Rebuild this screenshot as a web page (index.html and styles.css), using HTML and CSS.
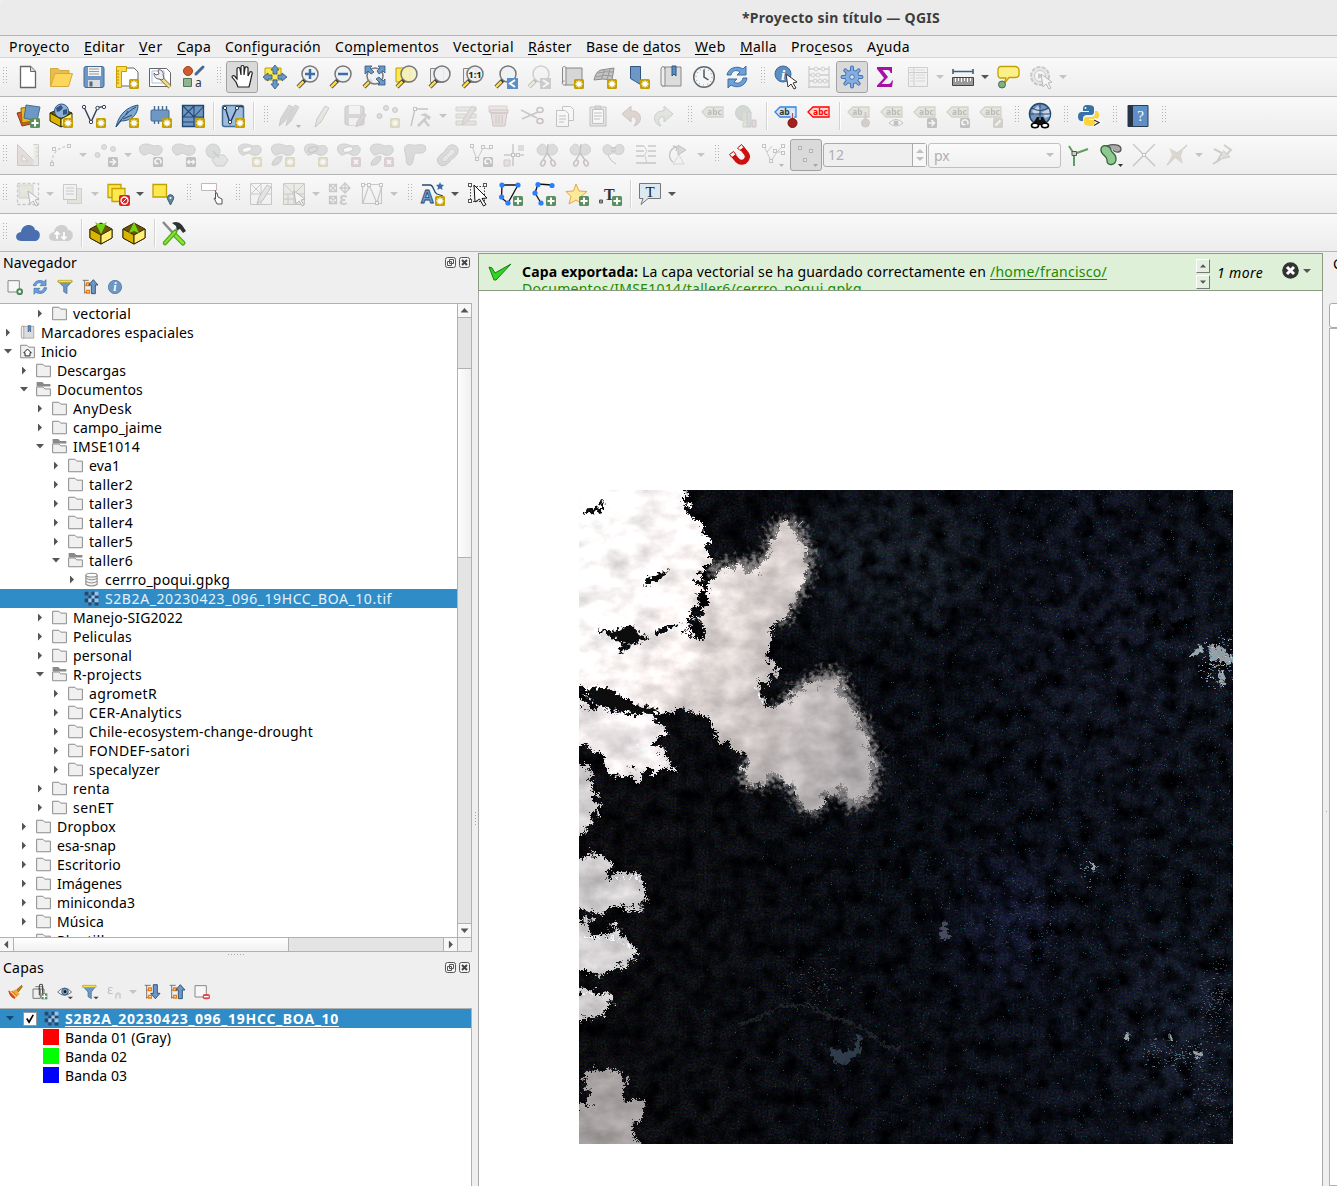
FILE: index.html
```html
<!DOCTYPE html>
<html lang="es">
<head>
<meta charset="utf-8">
<title>*Proyecto sin título — QGIS</title>
<link rel="stylesheet" href="styles.css">
</head>
<body>
<div class="window">
  <header class="titlebar"><span data-w="198">*Proyecto sin título — QGIS</span></header>
  <nav class="menubar">
    <span data-w="61">Pro<u>y</u>ecto</span><span data-w="41"><u>E</u>ditar</span><span data-w="24"><u>V</u>er</span><span data-w="34"><u>C</u>apa</span><span data-w="96">Con<u>f</u>iguración</span><span data-w="104">Co<u>m</u>plementos</span><span data-w="61">Vect<u>o</u>rial</span><span data-w="44"><u>R</u>áster</span><span data-w="95">Base de <u>d</u>atos</span><span data-w="31"><u>W</u>eb</span><span data-w="37"><u>M</u>alla</span><span data-w="62">Pro<u>c</u>esos</span><span data-w="43">A<u>y</u>uda</span>
  </nav>
  <div class="toolbar" data-items="G new open save layout manager style g hand:p pan zoomin zoomout zoomfull zoomsel zoomlayer zoomone zoomlast zoomnext:o newmap new3d newmark marks clock refresh g identify abacus:o gear:p sigma table:oa ruler:a tip action:oa"></div>
  <div class="toolbar" data-items="G addlayer geopkg newshape spatialite chip mesh s virtual s g pencils:o pencil:o saveedit:o addpts:o vertex:oa form:o trash:o cut:o copy:o paste:o undo:o redo:o g label:o pie:o s labelpin labelred s lab1:o lab2:o lab3:o lab4:o lab5:o g globe g python g help g"></div>
  <div class="toolbar" data-items="G triangle:o curve:oa movepts:oa blobrot:o blobscale:o circlehex:o ring:o part:o fillring:o delring:o delpart:o reshape:o offset:o splitnode:o trimnode:o split:o splitpart:o merge:o attrs:o rotate:oa g magnet snapnode:o snapgrid:po @spin @combo topo avoid cross:o crossfill:oa trace:o"></div>
  <div class="toolbar" data-items="G select:oa selform:oa deselect:a selplace g maptip g formedit:o selval:oa selexpr:o vpoly:oa g annot:a modsel annpoly annline annstar anntext s balloon:a"></div>
  <div class="toolbar last" data-items="G cloud cloudsync s boxdown boxup s tools"></div>

  <main class="work">
    <aside class="docks">
      <section class="dock browser">
        <div class="dock-title"><span data-w="74">Navegador</span><i class="dock-btns"></i></div>
        <div class="dock-tools" data-small="addsmall refresh filter collapse info"></div>
        <div class="tree-box">
          <div class="tree" id="tree"></div>
          <div class="vscroll"><i class="sb up"></i><i class="trough t1"></i><i class="thumb"></i><i class="trough t2"></i><i class="sb down"></i></div>
          <div class="hscroll"><i class="sb left"></i><i class="thumb"></i><i class="trough"></i><i class="sb right"></i><i class="corner"></i></div>
        </div>
      </section>
      <div class="hsplit"></div>
      <section class="dock layers">
        <div class="dock-title"><span data-w="41">Capas</span><i class="dock-btns"></i></div>
        <div class="dock-tools" data-small="brush group eye filterdd eps:oa expand collapse remove"></div>
        <div class="layer-box">
          <div class="layer sel"><i class="tri open"></i><i class="check"><svg viewBox="0 0 13 13"><path d="M3 6l2.5 4L10 2" fill="none" stroke="#000" stroke-width="1.8"/></svg></i><i class="ras" data-icon="raster"></i><b data-w="274">S2B2A_20230423_096_19HCC_BOA_10</b></div>
          <div class="layer"><i class="swatch red"></i><span data-w="106">Banda 01 (Gray)</span></div>
          <div class="layer"><i class="swatch green"></i><span data-w="62">Banda 02</span></div>
          <div class="layer"><i class="swatch blue"></i><span data-w="62">Banda 03</span></div>
        </div>
      </section>
    </aside>
    <div class="vsplit"></div>
    <section class="canvas">
      <div class="message">
        <svg class="tick" viewBox="0 0 24 18"><path d="M1 4l3 1 3 5L23 1 8 17H6z" fill="#2fd81f" stroke="#16781a"/></svg>
        <div class="msg-text">
          <div class="msg-line"><b data-w="116">Capa exportada:</b><span data-w="344">La capa vectorial se ha guardado correctamente en</span><a data-w="117">/home/francisco/</a></div>
          <div class="msg-line"><a data-w="340">Documentos/IMSE1014/taller6/cerrro_poqui.gpkg</a></div>
        </div>
        <div class="msg-spin"><i class="up"></i><i class="down"></i></div>
        <em data-w="46">1 more</em>
        <svg class="close" viewBox="0 0 17 17"><circle cx="8.500" cy="8.500" r="8.300" fill="#333"/><path d="M5 5l7 7M12 5l-7 7" stroke="#fff" stroke-width="3"/></svg>
        <i class="dd"></i>
      </div>
      <svg class="raster" id="scene" viewBox="0 0 654 654" width="654" height="654">
        <defs>
          <filter id="rough" x="-5%" y="-5%" width="110%" height="110%" color-interpolation-filters="sRGB">
            <feTurbulence type="fractalNoise" baseFrequency="0.11" numOctaves="5" seed="4" result="n"/>
            <feDisplacementMap in="SourceGraphic" in2="n" scale="22" xChannelSelector="R" yChannelSelector="G" result="d"/>
            <feTurbulence type="fractalNoise" baseFrequency="0.6" numOctaves="2" seed="5" result="fine"/>
            <feDisplacementMap in="d" in2="fine" scale="7" xChannelSelector="R" yChannelSelector="G" result="e"/>
            <feGaussianBlur in="e" stdDeviation="0.7" result="b"/>
            <feTurbulence type="fractalNoise" baseFrequency="0.035 0.05" numOctaves="6" seed="8" result="t"/>
            <feColorMatrix in="t" type="matrix" values="0.36 0 0 0 0.72  0.36 0 0 0 0.71  0.36 0 0 0 0.71  0 0 0 0 1" result="g"/>
            <feComposite in="b" in2="g" operator="arithmetic" k1="1.120" k2="0" k3="0" k4="0"/>
          </filter>
          <filter id="fluff" x="-20%" y="-20%" width="140%" height="140%" color-interpolation-filters="sRGB">
            <feGaussianBlur in="SourceGraphic" stdDeviation="4" result="s"/>
            <feTurbulence type="fractalNoise" baseFrequency="0.22" numOctaves="4" seed="21" result="n"/>
            <feDisplacementMap in="s" in2="n" scale="26" xChannelSelector="R" yChannelSelector="G"/>
          </filter>
          <filter id="grain" x="0" y="0" width="100%" height="100%" color-interpolation-filters="sRGB">
            <feTurbulence type="fractalNoise" baseFrequency="0.5" numOctaves="3" seed="3"/>
            <feColorMatrix type="matrix" values="0.300 0 0 0 -0.115  0 0.300 0 0 -0.108  0 0 0.350 0 -0.115  0 0 0 0 1"/>
          </filter>
          <filter id="mottle" x="0" y="0" width="100%" height="100%" color-interpolation-filters="sRGB">
            <feTurbulence type="fractalNoise" baseFrequency="0.06" numOctaves="6" seed="12"/>
            <feColorMatrix type="matrix" values="0 0 0 0 0  0 0 0 0 0  0 0 0 0 0.008  2.200 0 0 0 -0.750"/>
          </filter>
          <filter id="soft" x="-100%" y="-100%" width="300%" height="300%" color-interpolation-filters="sRGB"><feGaussianBlur stdDeviation="26"/></filter>
          <filter id="jag" x="-30%" y="-30%" width="160%" height="160%"><feTurbulence type="fractalNoise" baseFrequency="0.25" numOctaves="3" seed="9"/><feDisplacementMap in="SourceGraphic" scale="10" xChannelSelector="R" yChannelSelector="G"/><feGaussianBlur stdDeviation="0.4"/></filter>
          <linearGradient id="cl" gradientUnits="userSpaceOnUse" x1="0" y1="80" x2="290" y2="230"><stop offset="0" stop-color="#fff"/><stop offset=".35" stop-color="#f8f4f3"/><stop offset=".5" stop-color="#d8d2d0"/><stop offset="1" stop-color="#b0adae"/></linearGradient>
          <linearGradient id="base" x1="0" x2="1" y1="0" y2="0"><stop offset="0" stop-color="#070504"/><stop offset=".45" stop-color="#04060a"/><stop offset=".75" stop-color="#080b14"/><stop offset="1" stop-color="#090d14"/></linearGradient>
          <clipPath id="frame"><rect width="654" height="654"/></clipPath>
        </defs>
        <g clip-path="url(#frame)">
          <rect width="654" height="654" fill="url(#base)"/>
          <g filter="url(#soft)"><ellipse cx="310" cy="70" rx="90" ry="70" fill="#131920"/><ellipse cx="430" cy="430" rx="40" ry="60" fill="#15193a" opacity=".7"/><ellipse cx="530" cy="160" rx="90" ry="150" fill="#0d101c"/><ellipse cx="600" cy="540" rx="40" ry="100" fill="#141a2c" opacity=".8"/></g>
          <rect width="654" height="654" filter="url(#grain)" style="mix-blend-mode:screen"/>
          <rect width="654" height="654" filter="url(#mottle)"/>
          <g filter="url(#fluff)" fill="#a39f9f" opacity=".8">
            <path d="M130 75L185 66 190 38 205 26 220 32 234 62 232 84 222 106 208 132 150 130zM194 220L214 196 242 182 262 178 272 205 288 232 301 274 296 308 275 322 250 300 238 326 222 322 205 290 170 300 160 286 170 262z"/>
          </g>
          <g filter="url(#rough)">
            <path fill="url(#cl)" d="M-12-12H104L107 14 112 30 125 37 128 60 128 77 117 87 122 103 112 120 108 143 120 149 124 143 118 130 127 113 134 103 128 92 138 82 160 76 173 82 187 72 192 48 205 33 216 38 226 63 226 83 219 103 212 122 194 137 192 157 184 167 202 180 192 190 179 193 187 210 194 220 214 204 242 192 258 188 264 205 281 232 294 273 290 302 275 315 265 298 248 305 238 322 226 320 214 298 194 285 176 296 164 286 169 267 138 247 128 227 113 220 84 223 60 217 27 200 10 202-12 190z"/>
            <path fill="#eae7e8" d="M-12 207L20 220 43 224 70 220 88 240 72 253 99 280 70 280 60 292 51 281 38 289 24 273 13 257-12 253z"/>
            <path fill="#d0cfd1" d="M-12 275H10L12 300 20 322 10 330 6 345-12 355zM-12 373L17 363 33 370 31 389 50 380 63 389 68 404 61 421 38 414 20 424-12 417zM-12 430L10 427 8 441 28 446 36 432 45 450 63 465 50 471 20 484-12 478zM-12 497L33 503 31 523-12 535z"/>
            <path fill="#a5a1a1" d="M5 583L20 577 44 583 44 610 67 613 62 628 50 637 68 666H-12V617H10z"/>
          </g>
          <g filter="url(#jag)" fill="#07080b"><path d="M17 138l17 4 20-8 5 10 12 3-18 7-9 10-6-1 4-9-10-7zM64 92l16-9 12-3-10 7-14 9zM76 141l13-6 14-2-12 6-14 7zM5 20l15-3 5-7-2 11-16 3zM7 200l20-3 25 17 28 6-7 4-33-2-22-8zM180 193l8 0v14l-6 1z"/></g>
          <g filter="url(#jag)" stroke="#f2faff" fill="none" stroke-width="1.800" stroke-dasharray="3 2 6 3 2 4"><path d="M84 4l16 0 5 20 14 12 3 32M112 83l3 20-6 20M12 144l24 5 18 9M38 160l14 3M5 205l20 14 22 3 28 6M57 254l18 14 22 12M177 198l7 16M78 146l12-5 10-5M30 390l30-4 6 14M5 447l20 1 18 2 18 16M4 502l26 3" /></g>
          <g filter="url(#jag)"><path d="M250 557l14 6 12-5 1-12 7-2-3 18-16 14-11-5z" fill="#3a4858" opacity=".8"/><path d="M160 535l22-8 18-10 30-3 18 12 20 5 20 10 20 16 15 2" stroke="#2b3034" stroke-width="2.500" fill="none" opacity=".7"/><path d="M572 130l6-11 3 15-4 7zM592 133l24-6-18 16z" fill="#000"/></g>
          <g filter="url(#jag)" fill="#b9c7cd"><path d="M613 162l8-8 4 8-12 6zM628 155l14 2 14 12-2 5-14-4-8 1zM640 176l7 10-4 12-4-8zM512 373l7 3-4 5zM543 547l7-5-2 7zM590 543l4 4-3 4zM612 562l12 1-4 5z" opacity=".8"/><path d="M361 440l5-10 5 18-9 2z" fill="#444b59"/></g>
          <g id="specks"></g>
        </g>
      </svg>
    </section>
    <aside class="rightdock"><span class="cut">C</span><i class="field"></i><i class="list"></i></aside>
  </main>
</div>
<script src="app.js"></script>
</body>
</html>
```

FILE: styles.css
```css
* { box-sizing: border-box; }
body { margin: 0; background: #efefef; font: 14px/19px "Noto Sans", "Open Sans", sans-serif; color: #000; }
i { font-style: normal; display: block; flex: none; }
svg { display: block; flex: none; }
.window { width: 1337px; height: 1186px; overflow: hidden; display: flex; flex-direction: column; }
[data-w] { display: inline-block; white-space: pre; flex: none; }

.titlebar { height: 36px; background: #ebebeb; border-bottom: 1px solid #b4b4b4; border-top-left-radius: 6px; padding: 8px 0 0 742px; font-weight: 700; color: #3d3d3d; flex: none; }
.menubar { height: 22px; padding: 1px 0 0 9px; display: flex; gap: 14px; border-bottom: 1px solid #d4d4d4; flex: none; }
.menubar u { text-decoration-thickness: 1px; text-underline-offset: 2px; }

.toolbar { height: 39px; flex: none; display: flex; align-items: center; gap: 1px; border-bottom: 1px solid #b5b5b5; background: linear-gradient(#f9f9f9, #ededed); }
.toolbar.last { height: 38px; }
.grip { width: 15px; height: 20px; display: flex; justify-content: flex-end; padding-right: 3px; }
.grip.first { width: 11px; }
.grip::after { content: ""; width: 5px; height: 18px; background: radial-gradient(circle at .5px .5px, #b2b2b2 .7px, transparent .8px) 0 0 / 3px 3px; }
.sep { width: 6px; height: 28px; background: linear-gradient(90deg, transparent 3px, #d2d2d2 3px, #d2d2d2 4px, #fff 4px, #fff 5px, transparent 5px); }
.tool { width: 32px; height: 32px; display: flex; align-items: center; padding: 0 0 0 4px; }
.tool svg { width: 24px; height: 24px; overflow: visible; }
.tool.arrow { width: 44px; }
.tool.arrow::after { content: ""; margin-left: 6px; border: 4px solid transparent; border-top-color: #555; border-bottom: 0; }
.tool.off > svg { opacity: .3; filter: grayscale(.5); }
.tool.off.arrow::after { border-top-color: #c4c4c4; }
.tool.pressed { background: #dadada; border: 1px solid #a2a2a2; border-radius: 3px; padding-left: 3px; }
.spin { width: 104px; height: 24px; border: 1px solid #aaa; border-radius: 3px; display: flex; background: #efefef; color: #b0b0b0; padding-left: 4px; line-height: 22px; }
.spin > span { flex: 1; }
.spin-btns { width: 14px; border-left: 1px solid #aaa; background: #f8f8f8; display: flex; flex-direction: column; align-items: center; justify-content: space-evenly; }
.spin-btns i { border: 4px solid transparent; }
.spin-btns .u { border-top: 0; border-bottom-color: #c0c0c0; }
.spin-btns .d { border-bottom: 0; border-top-color: #c0c0c0; }
.combo { width: 133px; height: 25px; border: 1px solid #c0c0c0; border-radius: 3px; background: linear-gradient(#fbfbfb, #f0f0f0); color: #b0b0b0; display: flex; justify-content: space-between; align-items: center; padding: 0 6px 0 5px; }
.combo i { border: 4px solid transparent; border-top-color: #c0c0c0; border-bottom: 0; }

.work { flex: 1; min-height: 0; display: flex; padding-top: 1px; }
.docks { width: 472px; flex: none; display: flex; flex-direction: column; margin-top: -1px; }
.dock-title { height: 22px; display: flex; justify-content: space-between; padding: 1px 2px 0 3px; }
.dock-btns { display: flex; gap: 3px; padding-top: 4px; }
.dock-btns svg { width: 11px; height: 11px; }
.dock-tools { height: 29px; display: flex; align-items: center; padding: 0 0 4px 7px; gap: 9px; }
.dock-tools .tool { width: 16px; height: 16px; padding: 0; }
.dock-tools .tool svg { width: 16px; height: 16px; }
.dock-tools .tool.arrow { width: 28px; }
.dock-tools .tool.arrow::after { margin-left: 6px; }
.browser { height: 700px; flex: none; }
.tree-box { width: 472px; height: 649px; border: 1px solid #b1b1b1; border-left: 0; background: #fff; display: grid; grid-template: 633px 14px / 457px 14px; }
.tree { overflow: hidden; }
.row { height: 19px; display: flex; align-items: center; padding-left: calc(var(--d) * 16px + 4px); }
.row .ico { width: 15px; height: 15px; margin: 0 6px 0 8px; }
.row .ico svg { width: 15px; height: 15px; }
.row.sel { background: #308cc6; color: #e6f1f9; }
.tri { width: 8px; height: 8px; }
.tri.closed { background: #555; clip-path: polygon(25% 0, 75% 50%, 25% 100%); }
.tri.open { background: #555; clip-path: polygon(0 20%, 100% 20%, 50% 75%); }
.vscroll { display: flex; flex-direction: column; border-left: 1px solid #b1b1b1; }
.hscroll { grid-column: 1 / 3; display: flex; border-top: 1px solid #b1b1b1; }
.sb { width: 13px; height: 13px; background: #f7f7f7; display: flex; align-items: center; justify-content: center; }
.sb::after { content: ""; width: 8px; height: 8px; background: #555; }
.up::after { clip-path: polygon(0 75%, 50% 20%, 100% 75%); }
.down::after { clip-path: polygon(0 25%, 100% 25%, 50% 80%); }
.left::after { clip-path: polygon(70% 0, 20% 50%, 70% 100%); }
.right::after { clip-path: polygon(30% 0, 80% 50%, 30% 100%); }
.vscroll .t1 { height: 51px; }
.vscroll .thumb { height: 190px; background: linear-gradient(90deg, #fdfdfd, #f0f0f0); border-block: 1px solid #b1b1b1; }
.trough { background: #e4e4e4; }
.vscroll .trough { border-top: 1px solid #b1b1b1; }
.vscroll .t2 { flex: 1; border-top: 0; border-bottom: 1px solid #b1b1b1; }
.hscroll .thumb { width: 276px; background: linear-gradient(#fff, #f0f0f0); border-inline: 1px solid #b1b1b1; }
.hscroll .trough { flex: 1; }
.hscroll .right { width: 15px; border-inline: 1px solid #b1b1b1; }
.hscroll .corner { width: 13px; background: #efefef; }
.hsplit { height: 5px; flex: none; background: radial-gradient(circle at .5px .5px, #aaa .7px, transparent .8px) 228px 2px / 3px 5px repeat-x; clip-path: inset(0 226px 0 228px); }
.layers { flex: 1; display: flex; flex-direction: column; }
.layers .dock-title { height: 23px; }
.layers .dock-tools { height: 28px; padding-bottom: 4px; }
.layer-box { flex: 1; background: #fff; border: 1px solid #b1b1b1; border-left: 0; border-bottom: 0; }
.layer { height: 19px; display: flex; align-items: center; padding-left: 43px; }
.layer.sel { background: #308cc6; color: #fff; padding-left: 6px; }
.layer.sel b { text-decoration: underline; text-underline-offset: 2px; text-decoration-thickness: 1px; }
.layer.sel .tri { background: #134a6e; }
.check { width: 14px; height: 14px; margin: 0 6px 0 9px; background: #fff; border: 1px solid #999; }
.ras { width: 15px; height: 15px; margin: 0 6px 0 1px; }
.ras svg { width: 15px; height: 15px; }
.swatch { width: 16px; height: 16px; margin: -1px 6px 0 0; }
.red { background: #f00; }
.green { background: #0f0; }
.blue { background: #00f; }

.vsplit { width: 6px; flex: none; background: linear-gradient(#efefef 557px, transparent 557px, transparent 572px, #efefef 572px), radial-gradient(circle at .5px .5px, #aaa .7px, transparent .8px) 3px 1px / 6px 3px; }
.canvas { width: 845px; flex: none; background: #fff; border: 1px solid #a9a9a9; border-block: 0; display: flex; flex-direction: column; }
.message { height: 38px; margin: 0 -1px; background: #dff0d8; border: 1px solid #899c82; display: flex; flex: none; }
.tick { width: 24px; height: 18px; margin: 9px 0 0 9px; }
.msg-text { width: 684px; height: 36px; overflow: hidden; padding: 8px 0 0 10px; }
.msg-line { height: 17px; line-height: 19px; display: flex; gap: 4px; white-space: nowrap; }
.msg-line a { color: #228b00; text-decoration: underline; text-underline-offset: 2px; }
.msg-spin { padding-top: 5px; display: flex; flex-direction: column; gap: 2px; }
.msg-spin i { width: 14px; height: 14px; background: #e5efe1; border: 1px solid #fff; border-right-color: #777; border-bottom-color: #777; display: flex; align-items: center; justify-content: center; }
.msg-spin i::after { content: ""; width: 6px; height: 6px; background: #555; }
.message em { margin: 9px 19px 0 7px; }
.close { width: 17px; height: 17px; margin: 8px 4px 0 0; }
.dd { border: 4px solid transparent; border-top-color: #555; border-bottom: 0; height: 4px; margin-top: 15px; }
.raster { margin: 199px 0 0 100px; }
.rightdock { flex: 1; padding-left: 6px; display: flex; flex-direction: column; overflow: hidden; background: radial-gradient(circle at .5px .5px, #aaa .7px, transparent .8px) 3px 558px / 12px 15px no-repeat; }
.cut { padding: 1px 0 0 4px; height: 50px; flex: none; }
.field { height: 25px; width: 40px; background: #fff; border: 1px solid #aaa; border-radius: 3px; }
.list { flex: 1; width: 40px; background: #fff; border: 1px solid #b1b1b1; }
```

FILE: app.js
```js
/* ---- icon parts, drawn on a 24 x 24 grid ---- */
const badge = (c, inner) => `<rect x="14" y="14" width="10" height="10" rx="1.5" fill="${c}"/><g transform="translate(-.5 -.5)">${inner}</g>`;
const star = badge('#c4a000', '<path d="M19.500 16v7M16 19.500h7M17 17l5 5M22 17l-5 5" stroke="#fff" stroke-width="1.300"/>');
const plus = badge('#5b8f5f', '<path d="M19.500 16v7M16 19.500h7" stroke="#fff" stroke-width="2"/>');
const kill = badge('#c8787f', '<path d="M17.500 17.500l4 4M21.500 17.500l-4 4" stroke="#fff" stroke-width="1.800"/>');
const gobadge = badge('#555', '<path d="M16 19.500h5M19 16.500l3 3-3 3" stroke="#fff" stroke-width="1.600" fill="none"/>');
const rotb = badge('#555', '<path d="M17 21a3 3 0 1 1 5 0M17 18v3h3" stroke="#fff" stroke-width="1.400" fill="none"/>');
const lens = (x = 14, y = 9, f = '#eef1f3') => `<path d="M9.500 14.500L2 22" stroke="#333" stroke-width="4"/><path d="M7.500 16.500L2 22" stroke="#fcd94f" stroke-width="2.500"/><circle cx="${x}" cy="${y}" r="8" fill="${f}" fill-opacity=".9" stroke="#777" stroke-width="1.500"/>`;
const blob = '<path d="M2 10C-2 4 2 1 7 1s6 2 9 2c6-2 8 2 7 5-1 4-5 5-8 4s-4-3-7-1-5 1-6-1z" fill="#9aa79c" stroke="#777"/>';
const tag = (c, f, t, tc) => `<path d="M1 8l5-5h16v10H6z" fill="${f}" stroke="${c}" stroke-width="1.300"/><text x="${t === 'ab' ? 10.5 : 13.5}" y="11" font-size="8.500" font-weight="700" text-anchor="middle" font-family="Noto Sans" fill="${tc}">${t}</text>`;
const cursor = '<path d="M12 9l11 8-4 1 3 5-2 1-3-5-3 3z" fill="#fff" stroke="#333"/>';
const sq = (x, y) => `<rect x="${x - 1.5}" y="${y - 1.5}" width="3" height="3" fill="#fff" stroke="#555"/>`;
const dot = (x, y) => `<circle cx="${x}" cy="${y}" r="2.600" fill="#2a7fff"/>`;
const cutter = '<path d="M4 3c4-4 7-1 8 3 1-4 5-7 9-3 4 5-1 9-4 9-2 0-4-1-5-3-1 2-3 3-5 3-4 0-7-5-3-9z" fill="#9aa79c" stroke="#777"/><path d="M13 1l-1 9-4 7M12 10l5 7" stroke="#555" stroke-width="1.500" fill="none"/><ellipse cx="8" cy="20" rx="2" ry="3" transform="rotate(25 8 20)" fill="none" stroke="#8a4b57" stroke-width="1.500"/><ellipse cx="18" cy="20" rx="2" ry="3" transform="rotate(-25 18 20)" fill="none" stroke="#8a4b57" stroke-width="1.500"/>';
const box = arrow => `<path d="M1 8l11-6 11 6v9l-11 6-11-6z" fill="#6b5600" stroke="#332b00"/><path d="M1 8l11 6v9L1 17z" fill="#d9b500" stroke="#332b00"/><path d="M23 8l-11 6v9l11-6z" fill="#ffee78" stroke="#332b00"/>${arrow}`;

const ICONS = {
  new: '<path d="M4.500 1.500h10l5 5v16h-15z" fill="#fff" stroke="#666" stroke-width="1.300"/><path d="M14.500 1.500v5h5" fill="#ddd" stroke="#666"/>',
  open: '<path d="M1.500 21V3.500H9l2 2h9V9" fill="#e8bd50" stroke="#d6a93f"/><path d="M1.500 21.500L6 8.500h17.500l-4 13z" fill="#fcd75b" stroke="#d6a93f"/>',
  save: '<rect x="2" y="1.500" width="20" height="21" rx="2" fill="#6d97c4" stroke="#466b92"/><path d="M6 2h13v9H6z" fill="#f3f3f3"/><path d="M7 4h10M7 6.500h10M7 9h10" stroke="#999"/><path d="M6 15h12v7H6z" fill="#ddd"/><path d="M7.500 16.500h3v5h-3z" fill="#466b92"/>',
  layout: '<path d="M4 3h15l4 4v14H4z" fill="#fff" stroke="#666"/><path d="M1.500 1.500h10v5h-5v16h-5z" fill="#fcd94f" stroke="#c4a000"/><path d="M2 6h2M2 9h2M2 12h2M2 15h2M2 18h2" stroke="#a88600"/>' + star,
  manager: '<path d="M1.500 3.500h17l4 4v14h-21z" fill="#fff" stroke="#666"/><path d="M4 6h12v12H4z" fill="none" stroke="#a9bfe8"/><path d="M13 13l9 9" stroke="#8a6d2a" stroke-width="4"/><path d="M13 13l9 9" stroke="#f2dc8c" stroke-width="2.500"/><path d="M10 5l1 4-3 1-2-2c0 4 2 6 5 6l3 1 2-2-1-3c1-3-2-6-5-5z" fill="#eee" stroke="#666"/>',
  style: '<circle cx="7" cy="6" r="4.500" fill="#cf5c2e" stroke="#a33f1a"/><path d="M15 9l7-7" stroke="#466b92" stroke-width="3" stroke-linecap="round"/><path d="M2.500 13.500h8v8h-8z" fill="#8fb58f" stroke="#4d7a55"/><text x="14" y="22" font-size="12" font-family="Noto Sans" fill="#333">a</text>',
  hand: '<path d="M8 22l-2-5-4-5c0-2 3-2 4 1l1 1V4c0-2 3-2 3 0l1 6V2c0-2 3-2 3 0v8l1-7c0-2 3-1 3 0v8l2-4c1-1 3 0 2 2l-2 9-1 4z" fill="#fff" stroke="#222" stroke-width="1.200"/>',
  pan: '<path d="M2 3h16v12H2z" fill="#fce94f" stroke="#c4a000"/><path d="M12 0l4 5h-2v4h-4V5H8zM12 24l4-5h-2v-4h-4v4H8zM0 12l5-4v2h4v4H5v2zM24 12l-5-4v2h-4v4h4v2z" fill="#6d97c4" stroke="#2f5580" stroke-width=".8"/>',
  zoomin: lens() + '<path d="M14 4v10M9 9h10" stroke="#3a6ea5" stroke-width="2.500"/>',
  zoomout: lens() + '<path d="M9 9h10" stroke="#3a6ea5" stroke-width="2.500"/>',
  zoomfull: lens(13, 11) + '<path d="M3 1h7L8 3l4 4-3 2-3-3-3 3zM23 1v7l-2-2-4 3-2-3 3-3-2-2zM23 20h-7l2-2-4-4 3-2 4 4 2-2z" fill="#6d97c4" stroke="#2f5580" stroke-width=".8"/>',
  zoomsel: '<path d="M1 3h14v14H1z" fill="#fce94f" stroke="#c4a000"/>' + lens(14, 9, '#f4efc4'),
  zoomlayer: '<path d="M2.500 3.500h13v14h-13z" fill="#eee" stroke="#888"/>' + lens(),
  zoomone: '<path d="M2.500 3.500h13v14h-13z" fill="#eee" stroke="#888"/>' + lens() + '<text x="14" y="13" font-size="9.500" font-weight="700" text-anchor="middle" font-family="Noto Sans" fill="#222">1:1</text>',
  zoomlast: lens() + '<path d="M13 13h11v11H13z" fill="#5b8fc4"/><path d="M21 15l-5 3.500 5 3.500" stroke="#fff" stroke-width="2" fill="none"/>',
  zoomnext: lens() + '<path d="M13 13h11v11H13z" fill="#777"/><path d="M16 15l5 3.500-5 3.500" stroke="#fff" stroke-width="2" fill="none"/>',
  newmap: '<path d="M5 3h17v17H5z" fill="#d6d6d6" stroke="#888"/><path d="M2.500 18V3c0-2 3.500-2 3.500 0v17H4.500c-3 0-3-4 0-4" fill="#eee" stroke="#888"/>' + star,
  new3d: '<path d="M1 15q2-9 7-10l13-2-2 12q-9-2-18 0z" fill="#c4c4c4" stroke="#8a8a8a"/><path d="M5 8q8-2 15-1M12 4l-4 11M17 4l-3 11M3 12q9-3 16-1" stroke="#999" fill="none"/>' + star,
  newmark: '<path d="M4.500 1.500h10v18l-5-3-5-3z" fill="#6d97c4" stroke="#2f5580"/>' + star,
  marks: '<path d="M3 2h19v19H3z" fill="#dcdcdc" stroke="#888"/><path d="M6 2v19H4a2 2 0 0 1-2-2V4c0-3 4-3 4 0" fill="#eee" stroke="#888"/><path d="M13 1h4v10l-2-2-2 2z" fill="#5b8fc4" stroke="#2f5580"/>',
  clock: '<circle cx="12" cy="12" r="10.300" fill="#f4f6f8" stroke="#666" stroke-width="1.500"/><circle cx="12" cy="12" r="8" fill="none" stroke="#5b8fc4" stroke-dasharray="1 3.190"/><path d="M12 4.500V12l4.500 3" stroke="#555" stroke-width="1.500" fill="none"/>',
  refresh: '<path d="M2 10C3 3 12 0 18 4l3-3v9h-9l3-3C11 4 7 6 6 10z" fill="#6d9fd8" stroke="#3a6ea5"/><path d="M22 13c-1 8-10 11-16 7l-3 3v-9h9l-3 3c4 3 8 0 9-4z" fill="#6d9fd8" stroke="#3a6ea5"/>',
  identify: '<circle cx="9" cy="9" r="8" fill="#5f8fc0" stroke="#3d6a9b"/><text x="9" y="14.500" font-size="15" font-style="italic" font-weight="700" text-anchor="middle" font-family="Liberation Serif" fill="#fff">i</text>' + cursor,
  abacus: '<path d="M2 1v22M22 1v22M2 4h20M2 10h20M2 16h20M1 22h22" stroke="#777" stroke-width="1.300"/><g fill="#eee" stroke="#777"><circle cx="9" cy="4" r="2"/><circle cx="16" cy="4" r="2"/><circle cx="6" cy="10" r="2"/><circle cx="11" cy="10" r="2"/><circle cx="8" cy="16" r="2"/><circle cx="13" cy="16" r="2"/><circle cx="18" cy="16" r="2"/></g>',
  gear: '<g id="teeth" stroke="#4573b3" stroke-width="4" stroke-linecap="round"><path d="M12 2.500v19M2.500 12h19M5.300 5.300l13.400 13.400M18.700 5.300L5.300 18.700"/></g><circle cx="12" cy="12" r="7" fill="#85ade0" stroke="#4573b3"/><path d="M12 2.500v19M2.500 12h19M5.300 5.300l13.400 13.400M18.700 5.300L5.300 18.700" stroke="#85ade0" stroke-width="2" stroke-linecap="round"/><circle cx="12" cy="12" r="2.300" fill="#dbe6f5" stroke="#4573b3"/>',
  sigma: '<path d="M4 2h15v6h-1.500c-.5-2-1-3-3.500-3H9.500l5.500 7-6.500 7h6c3 0 3.500-1 4.500-3.500h1L19 22H4v-1.500L11 13 4 4z" fill="#a811a8"/>',
  table: '<path d="M2.500 2.500h19v19h-19z" fill="#eef" stroke="#777"/><path d="M2 7.500h20M8 3v18" stroke="#777"/><path d="M4 5h3M10 5h9M4 10h3M4 13h3M4 16h3M10 10h9M10 13h9M10 16h9" stroke="#999" stroke-width="1.200"/>',
  ruler: '<path d="M2 6.500h20M2 4v5M22 4v5" stroke="#3d5f80" stroke-width="1.600"/><path d="M1.500 12.500h21v8h-21z" fill="#999" stroke="#444"/><path d="M4.500 13v4M7.500 13v3M10.500 13v4M13.500 13v3M16.500 13v4M19.500 13v3" stroke="#fff"/>',
  tip: '<path d="M5 1.500h14q4 0 4 4v4q0 3-4 3h-6L8 19l2-6H5q-3 0-3-3V5q0-3.500 3-3.500z" fill="#fcf08a" stroke="#c4a000" stroke-width="1.300"/><circle cx="6" cy="19.500" r="3.500" fill="#7fb07f" stroke="#466b4a"/>',
  action: '<circle cx="11" cy="11" r="9" fill="#ccc" stroke="#666" stroke-width="2" stroke-dasharray="4 1.500"/><circle cx="11" cy="11" r="5.500" fill="#fff" stroke="#666"/><path d="M9 8l5 3-5 3z" fill="#666"/>' + cursor,
  addlayer: '<path d="M1 9l9 -2 5 13-9 2z" fill="#cf5c2e" stroke="#8f3a17"/><path d="M5 4l11-1 1 14-11 2z" fill="#e8b91d" stroke="#8a6d00"/><path d="M10 1l14 2-3 14-13-3z" fill="#6d97c4" stroke="#466b92"/>' + plus,
  geopkg: '<path d="M1 9l11-5 11 5-11 6z" fill="#6b5600" stroke="#332b00"/><circle cx="12.500" cy="7" r="7" fill="#8db0d8" stroke="#2f5580"/><path d="M7 4l5-3 2 3-3 3-3 1zM14 6l4-1 0 5-4 1z" fill="#2f5580"/><path d="M1 9l11 6v8L1 17z" fill="#d9b500" stroke="#332b00"/><path d="M23 9l-11 6v8l11-6z" fill="#ffee78" stroke="#332b00"/>' + star,
  newshape: '<path d="M2 3l7 15 6-13c1-3 4-2 7-2" stroke="#333f55" stroke-width="1.400" fill="none"/><g fill="#fff" stroke="#333f55"><circle cx="2" cy="3" r="1.700"/><circle cx="9" cy="18" r="1.700"/><circle cx="15.500" cy="4" r="1.700"/><circle cx="22" cy="3" r="1.700"/></g>' + star,
  spatialite: '<path d="M1 23C4 10 12 3 23 1c0 9-6 16-17 16z" fill="#7fa8d3" stroke="#2f5580"/><path d="M1 23C6 15 12 8 21 3M8 15l9-4M11 11l2-4" stroke="#24476e" fill="none"/>' + star,
  chip: '<path d="M6.500 2v4M10.500 2v4M14.500 2v4M18.500 2v4M6.500 16v4M10.500 16v4" stroke="#466b92" stroke-width="1.400"/><rect x="3" y="6" width="18" height="11" rx="1" fill="#6d97c4" stroke="#466b92"/>' + star,
  mesh: '<path d="M1.500 1.500h21v21h-21z" fill="#6d97c4" stroke="#24476e" stroke-width="1.300"/><path d="M1 13h22M13 1v22M2 2l11 11M13 2L2 13M13 13L23 2M2 18h11" stroke="#24476e" stroke-width="1.100"/>' + star,
  virtual: '<rect x="1.500" y="1.500" width="21" height="21" rx="2" fill="#9dbde0" stroke="#466b92" stroke-width="1.500"/><path d="M4 3l5 16 7-15c2-2 4-2 6-1" stroke="#24384f" stroke-width="1.400" fill="none"/><g fill="#fff" stroke="#24384f"><circle cx="4" cy="4" r="1.700"/><circle cx="9" cy="18" r="1.700"/><circle cx="16" cy="4" r="1.700"/></g>' + star,
  pencils: '<path d="M2 22l2-8 8-13 4 2-8 14zM9 22l2-8 7-13 4 2-8 14z" fill="#a58a86" stroke="#777"/><path d="M19 21h5l-2.500 3z" fill="#333"/>',
  pencil: '<path d="M5 23l2-8 8-13 4 2-8 14z" fill="#ccc8a4" stroke="#666"/>',
  saveedit: '<rect x="2" y="2" width="19" height="19" rx="2" fill="#999" stroke="#666"/><path d="M6 2h11v8H6zM6 14h10v7H6z" fill="#eee"/><path d="M13 23l1-5 6-9 3 2-6 10z" fill="#c9887f" stroke="#777"/>',
  addpts: '<g fill="#aaa" stroke="#666"><circle cx="10" cy="4" r="2.500"/><circle cx="3.500" cy="12" r="2.500"/><circle cx="19" cy="6" r="2.500"/></g>' + star,
  vertex: '<path d="M2 22L6 5h13" stroke="#555" stroke-width="1.300" fill="none"/>' + sq(6, 5) + '<path d="M9 22l8-8M20 22l-5-6" stroke="#776" stroke-width="2.500"/><path d="M11 11l5-2 6 4-2 3-5-4z" fill="#776"/>',
  form: '<path d="M2 3h20v4H2zM2 10h20v4H2zM2 17h20v4H2z" fill="#ccc8a4" stroke="#887"/><path d="M8 21l2-7 8-12 4 2-8 13z" fill="#c9a79f" stroke="#777"/>',
  trash: '<path d="M2 2h18v6H2z" fill="#d6c9a4" stroke="#a77"/><path d="M4 9h16l-2 13H6zM3 6h18v3H3z" fill="#d9b0b0" stroke="#a55"/><path d="M9 11v9M12 11v9M15 11v9" stroke="#a55"/>',
  cut: '<path d="M1 6l16 8M2 15l16-7" stroke="#666" stroke-width="1.800"/><ellipse cx="20" cy="6" rx="3" ry="2.500" fill="none" stroke="#754b51" stroke-width="1.500"/><ellipse cx="20" cy="17" rx="3" ry="2.500" fill="none" stroke="#754b51" stroke-width="1.500"/>',
  copy: '<path d="M9.500 2.500h8l3 3v11h-11z" fill="#fff" stroke="#555"/><path d="M3.500 6.500h9l3 3v13h-12z" fill="#fff" stroke="#555"/><path d="M6 12h7M6 15h7M6 18h5" stroke="#555"/>',
  paste: '<path d="M4 3h16v19H4z" fill="#c9c9b8" stroke="#555"/><path d="M6.500 5.500h11v14h-11z" fill="#fff" stroke="#555"/><path d="M9 2h6v3H9zM8 9h8M8 12h8M8 15h6" stroke="#555" fill="#999"/>',
  undo: '<path d="M3 10l9-8v5c12-1 12 13 3 15 5-6 1-10-3-9v5z" fill="#c5886c" stroke="#8f5a3f"/>',
  redo: '<path d="M21 10l-9-8v5C0 6 0 20 9 22c-5-6-1-10 3-9v5z" fill="#b4c4ac" stroke="#66755f"/>',
  label: tag('#8b855c', '#c9c48c', 'abc', '#333'),
  pie: '<circle cx="9" cy="9" r="7.500" fill="#7d9a78" stroke="#777"/><path d="M9 9h7.500a7.500 7.500 0 0 1-7.500 7.500z" fill="#c98"/><path d="M13 8h4v15h-4z" fill="#8aa" stroke="#777"/><path d="M18 16h4v7h-4z" fill="#c9a" stroke="#866"/><path d="M9 18h4v5H9z" fill="#cc9" stroke="#886"/>',
  labelpin: tag('#3584e4', '#cfe3fb', 'ab', '#333') + '<path d="M18.500 8v9" stroke="#eee" stroke-width="3.500" stroke-linecap="round"/><path d="M18.500 9v9" stroke="#a55" stroke-width="1.300"/><circle cx="18.500" cy="19" r="4.500" fill="#a32020" stroke="#711"/>',
  labelred: tag('#f00', '#ffd5d5', 'abc', '#f00'),
  lab1: tag('#8b855c', '#c9c48c', 'ab', '#333') + '<circle cx="18.500" cy="19" r="4" fill="#a77" stroke="#866"/><path d="M18.500 8v8" stroke="#866" stroke-width="2"/>',
  lab2: tag('#8b855c', '#c9c48c', 'abc', '#333') + '<path d="M9 19q7-7 14 0-7 6-14 0z" fill="#fff" stroke="#555"/><circle cx="16" cy="19" r="2.500" fill="#555"/>',
  lab3: tag('#8b855c', '#c9c48c', 'abc', '#333') + gobadge,
  lab4: tag('#8b855c', '#c9c48c', 'abc', '#333') + rotb,
  lab5: tag('#8b855c', '#c9c48c', 'abc', '#333') + badge('#8b855c', '<path d="M17 22l5-5" stroke="#fff" stroke-width="2"/>'),
  globe: '<circle cx="12" cy="10" r="10.500" fill="#7595ba" stroke="#24476e" stroke-width="1.500"/><path d="M4 7l6-5 3 3-2 4-4 2zM14 8l7-3 1 7-5 2z" fill="#c5d4e8"/><path d="M2 10h20M12 0v20M4 4q8 5 16 0" stroke="#24476e" fill="none"/><path d="M4 21l5-8h2v3h2v-3h2l5 8z" fill="#111"/><ellipse cx="7" cy="21.500" rx="3.500" ry="2.200" fill="#fff" stroke="#000" stroke-width="1.600"/><ellipse cx="17" cy="21.500" rx="3.500" ry="2.200" fill="#fff" stroke="#000" stroke-width="1.600"/>',
  python: '<path d="M11 1C6 1 6 3 6 6v1h6v1H4c-4 0-4 9 0 9h2v-3c0-2 2-3 4-3h4c2 0 3-1 3-3V4c0-2-2-3-6-3z" fill="#3672a5"/><path d="M13 22c5 0 5-2 5-5v-1h-6v-1h7c4 0 4-7 1-8h-2v3c0 2-2 3-4 3h-4c-2 0-3 1-3 3v3c0 2 2 3 6 3z" fill="#ffd43b"/><circle cx="8.500" cy="4" r="1" fill="#fff"/><path d="M17 15l6 3.500-6 3.500" stroke="#fff" stroke-width="3" fill="none"/><path d="M17 16l5 2.500-5 3" stroke="#333" stroke-width="1.300" fill="none"/>',
  help: '<path d="M2 1.500h20v21H2z" fill="#5f8fc7" stroke="#2b3b50"/><path d="M2 1.500h5v21H2z" fill="#263445"/><text x="14.500" y="17" font-size="15" text-anchor="middle" font-family="Liberation Serif" fill="#fff">?</text>',
  triangle: '<path d="M1.500 1.500v21h21zM6 12v6h6z" fill="#d6a79d" fill-rule="evenodd" stroke="#866"/><path d="M17.500 1.500h5v21h-5" fill="#ddd8bb" stroke="#777"/><path d="M20 5h2M20 9h2M20 13h2" stroke="#777"/>',
  curve: '<path d="M3 20q0-15 17-17" stroke="#666" stroke-width="1.200" fill="none" stroke-dasharray="3 2"/>' + sq(3, 21) + sq(5, 6) + sq(20, 3),
  movepts: '<g fill="#aaa" stroke="#777"><circle cx="10" cy="4" r="2.500"/><circle cx="3.500" cy="12" r="2.500"/><circle cx="19" cy="6" r="2.500"/></g>' + gobadge,
  blobrot: blob + rotb,
  blobscale: blob + badge('#555', '<path d="M16 19.500h7M18 17.500l-2 2 2 2M21 17.500l2 2-2 2" stroke="#fff" stroke-width="1.300" fill="none"/>'),
  circlehex: '<circle cx="8" cy="8" r="7" fill="#9aa79c" stroke="#777"/><path d="M11 12h8l4 5-4 6h-8l-4-6z" fill="#b9c4cc" stroke="#777"/><path d="M8 8l6 7" stroke="#444"/>',
  ring: blob + '<ellipse cx="9" cy="6.500" rx="5" ry="2.500" fill="#fff" stroke="#777" transform="rotate(-15 9 6.500)"/>' + star,
  part: blob + '<path d="M1 22c0-5 5-9 10-9 0 6-4 10-10 9z" fill="#9aa79c" stroke="#777"/>' + star,
  fillring: blob + '<ellipse cx="9" cy="6.500" rx="5" ry="2.500" fill="#9aa79c" stroke="#555" transform="rotate(-15 9 6.500)"/>' + star,
  delring: blob + '<ellipse cx="11" cy="6.500" rx="5" ry="2.500" fill="#fff" stroke="#777" transform="rotate(-15 11 6.500)"/>' + kill,
  delpart: blob + '<path d="M1 22c0-5 5-9 10-9 0 6-4 10-10 9z" fill="#9aa79c" stroke="#777"/>' + kill,
  reshape: '<path d="M2 9C0 2 5 1 9 2s10-2 13 1c3 6-3 8-8 7s-2 11-7 12S4 15 2 9z" fill="#9aa79c" stroke="#777"/>',
  offset: '<path d="M3 21c-4-5 1-9 4-11s3-7 8-8 9 4 6 9-5 4-7 7-7 7-11 3z" fill="#9aa79c" stroke="#666"/><path d="M6 18c-1-3 2-5 4-6s3-6 6-6 4 3 2 5-5 3-6 5-4 4-6 2z" fill="#c8cfbb" stroke="#777"/>',
  splitnode: '<path d="M3 3l5 14 6-12 8 1" stroke="#666" fill="none"/>' + sq(3, 3) + sq(8, 16) + sq(14, 4) + sq(22, 4) + rotb,
  trimnode: '<path d="M11 1v22M2 12h20" stroke="#666" stroke-width="1.500"/>' + sq(11, 12) + sq(16, 12) + '<path d="M16 2h6v6h-6z" fill="#aa8"/><path d="M2 17h6v6H2z" fill="#cbb" stroke="#a66"/>',
  split: cutter, splitpart: cutter,
  merge: '<path d="M2 6C2 1 9 0 11 5h3c1-5 9-5 9 1s-6 7-9 4h-3c-3 3-9 2-9-4z" fill="#9aa79c" stroke="#777"/><path d="M7 12q2 6 8 9" stroke="#555" fill="none"/><path d="M10 5h5M10 8h5" stroke="#444"/>',
  attrs: '<path d="M2 3h8M14 3h8M2 8h8M14 8h8M2 13h8M14 13h8M2 20h20" stroke="#666" stroke-width="1.400"/><path d="M10 3l3 5M13 8l-3 5M11 13l2 7" stroke="#777"/>',
  rotate: '<path d="M6 19a8.500 8.500 0 0 1 3-15M6 3l4 1-1 4" stroke="#555" stroke-width="1.300" fill="none"/><path d="M11 2l8 5-8 5z" fill="#999" stroke="#555"/><path d="M12 12l5 9H6z" fill="none" stroke="#999"/>',
  magnet: '<path d="M4.500 11.500l5 6c3 3 7 2 9-1s1-5-1-7l-4-5" stroke="#cc0f0f" stroke-width="5" fill="none"/><path d="M1.500 11.500l4-3 2.500 3-4 3zM9.500 5l4-3.500L16 4.500l-4 3z" fill="#f3f3f3" stroke="#c00"/>',
  snapnode: '<path d="M3 3l7 15 6-9 6-6M6 9l5-6M16 9h6" stroke="#666" fill="none"/>' + sq(3, 3) + sq(10, 18) + sq(22, 3) + sq(22, 10) + sq(14, 8) + '<path d="M18 21h5l-2.500 3z" fill="#333"/>',
  snapgrid: sq(6, 5) + sq(17, 8) + sq(11, 17) + '<path d="M19 21h5l-2.500 3z" fill="#333"/>',
  topo: '<path d="M3 3l5 8v12M8 11l14-5" stroke="#5aa05a" stroke-width="2" fill="none"/><path d="M6 8.500h4.500v4H6z" fill="#ccc" stroke="#555"/>',
  avoid: '<path d="M8 3c5-2 14-2 14 3 0 4-6 4-8 1" fill="#aaa" stroke="#555" stroke-width="1.300"/><path d="M2 6c1-5 9-4 10 1 0 3 5 3 5 9 0 7-9 7-9 2 1-5-7-6-6-12z" fill="#8fc98f" stroke="#33633a" stroke-width="1.300"/><path d="M19 21h5l-2.500 3z" fill="#333"/>',
  cross: '<path d="M1 1l22 22M23 1L1 23" stroke="#666" stroke-width="1.500"/>' + sq(12, 12),
  crossfill: '<path d="M2 22L22 2" stroke="#777" stroke-width="1.500"/><path d="M4 5l8 4 7-5-3 9 2 8-8-6-7 5 4-8z" fill="#a39a6a"/>',
  trace: '<path d="M3 21l8-5M4 6l8 4-5 9M14 2l7 5-6 6" stroke="#777" stroke-width="2" fill="none"/><path d="M11 16l9-2-7-7" fill="#b4ad8c" stroke="#777"/>',
  select: '<path d="M1.500 1.500h21v21h-21z" fill="none" stroke="#666" stroke-width="1.300" stroke-dasharray="3 2"/><path d="M3 3h14v13H3z" fill="#c9c48c" stroke="#8b855c"/>' + cursor,
  selform: '<path d="M6.500 6.500h14v15h-14z" fill="#c9c48c" stroke="#8b855c"/><path d="M2.500 2.500h13v15h-13z" fill="#eee" stroke="#666"/><path d="M5 6h8M5 9h8M5 12h8" stroke="#666"/>',
  deselect: '<path d="M2 2.500h13v13H2z" fill="#fce94f" stroke="#c4a000" stroke-width="1.300"/><path d="M6 6.500h13v13H6z" fill="#fce94f" stroke="#c4a000" stroke-width="1.300"/><rect x="13" y="13" width="11" height="11" rx="2" fill="#d22"/><circle cx="18.500" cy="18.500" r="3.500" stroke="#fff" stroke-width="1.300" fill="none"/><path d="M16 21l5-5" stroke="#fff"/>',
  selplace: '<path d="M2 2.500h13.500V15H2z" fill="#fce94f" stroke="#c4a000" stroke-width="1.300"/><path d="M19.500 23l-3-6a3.200 3.200 0 1 1 6 0z" fill="#5d84a0" stroke="#3e6078"/><circle cx="19.500" cy="16" r="1" fill="#fff"/>',
  maptip: '<path d="M1.500 1.500h15v7h-15z" fill="#fff" stroke="#bbb"/><path d="M15 8l1 3" stroke="#d33"/><path d="M15.500 11v6l-1.500-1 3 6h5v-5l-4-2-1-4z" fill="#fff" stroke="#555"/>',
  formedit: '<path d="M1.500 1.500h21v21h-21z" fill="none" stroke="#666"/><path d="M1 12h22M12 1v22M2 2l10 10M12 2L2 12" stroke="#666"/><path d="M8 22l2-7 8-12 4 2-8 13z" fill="#cbb" stroke="#555"/>',
  selval: '<path d="M1.500 1.500h21v21h-21z" fill="#d6d3b0" stroke="#666"/><path d="M1 12h22M12 1v22M2 2l10 10M12 12L22 2M6 12v10M1 17h11" stroke="#666"/>' + cursor,
  selexpr: '<path d="M2.500 2.500h7v7h-7zM2.500 14.500h7v7h-7zM2 2l8 8M10 2l-8 8M2 14l8 8M10 14l-8 8M18 1l5 5-5 5-5-5zM13 6h10M18 1v10" fill="none" stroke="#666" stroke-width="1.300"/><text x="12" y="23" font-size="17" font-weight="700" font-family="Noto Sans" fill="#777">ε</text>',
  vpoly: '<path d="M2.500 2.500h19v19h-19zM3 21L9 3l8 18 5-18" fill="none" stroke="#666" stroke-width="1.200"/>' + sq(3, 3) + sq(9, 3) + sq(21, 3) + sq(17, 21),
  annot: '<text x="0" y="21" font-size="18" font-weight="700" font-family="Noto Sans" fill="#6d97c4" stroke="#1f4a7a" stroke-width=".8">A</text><path d="M1 3h8c4 0 3 7 7 9l6 2" stroke="#1f4a7a" stroke-width="1.300" fill="none"/><path d="M19 0l1 2.500 3 .5-2 2 .5 3L19 6.500 16.500 8l.5-3-2-2 3-.5z" fill="#3a6ea5"/>' + star,
  modsel: '<path d="M4.500 4.500h14v15h-14z" fill="none" stroke="#444" stroke-dasharray="1.500 1.500"/>' + sq(4, 3) + sq(19, 3) + sq(4, 19) + '<path d="M8 3l13 13-5 .5 4 6-2.500 1.500-4-7L9 20z" fill="#fff" stroke="#111"/>',
  annpoly: '<path d="M3 3h16L9 21 2.500 16z" fill="none" stroke="#111" stroke-width="1.300"/>' + dot(3, 3) + dot(19, 3) + dot(2.6, 15) + dot(9, 21) + plus,
  annline: '<path d="M20 3L6 2 3 11l6 10" fill="none" stroke="#111" stroke-width="1.300"/>' + dot(20, 3.5) + dot(6, 2.6) + dot(3, 11) + dot(9, 21) + plus,
  annstar: '<path d="M11 2l3 7 8 .5-6 5 2 8-7-4.500L4 22l2-7.500-5-5 7.500-.5z" fill="#fde99a" stroke="#e9a44c"/>' + plus,
  anntext: '<text x="6" y="18" font-size="16" font-weight="700" font-family="Liberation Serif" fill="#333">T</text><path d="M1.500 18h3v3h-3z" fill="#999" stroke="#555"/>' + plus,
  balloon: '<path d="M1.500 1.500h21v15H10l-7 6 2-6H1.500z" fill="#dce9f1" stroke="#777"/><text x="12" y="14.500" font-size="15" text-anchor="middle" font-family="Liberation Serif" fill="#222">T</text>',
  cloud: '<path d="M5 20c-7 0-6-9 0-9 1-9 13-9 14-2 7 0 6 11 0 11z" fill="#4a6fb0"/>',
  cloudsync: '<path d="M5 20c-7 0-6-9 0-9 1-9 13-9 14-2 7 0 6 11 0 11z" fill="#cfcfcf"/><path d="M8 18v-6M5.500 13.500L8 11l2.500 2.500M15 11v6M12.500 15.500L15 18l2.500-2.500" stroke="#fff" stroke-width="1.700" fill="none"/>',
  boxdown: box('<path d="M6 1l4 2h4l4-2-6 12z" fill="#73d216"/>'),
  boxup: box('<path d="M12 1l5 11-5-2-5 2z" fill="#73d216"/>'),
  tools: '<path d="M1 1l10 11" stroke="#888" stroke-width="2.500"/><path d="M12 13l9 9" stroke="#4da81b" stroke-width="5" stroke-linecap="round"/><path d="M12 13l9 9" stroke="#8ae234" stroke-width="2.500" stroke-linecap="round"/><path d="M13 11l4-5" stroke="#999" stroke-width="3"/><path d="M3 22L13 11" stroke="#4da81b" stroke-width="4.500" stroke-linecap="round"/><path d="M3 22L13 11" stroke="#8ae234" stroke-width="2" stroke-linecap="round"/><path d="M10 2q6-3 10 2l4 6-3 2-3-4-3 1-1-4z" fill="#2e3436"/>',
  addsmall: '<path d="M1.500 2.500h17v17h-17z" fill="#f7f7f7" stroke="#888" stroke-width="1.500"/><circle cx="19" cy="19" r="3.500" fill="#fff" stroke="#4d8a55" stroke-width="3"/>',
  filter: '<path d="M1 3h22l-8 9v10l-5-3v-7z" fill="#6d97c4" stroke="#466b92"/><path d="M2 2h20v3H2z" fill="#fce94f" stroke="#c4a000"/>',
  filterdd: '<path d="M1 3h20l-7 9v10l-5-3v-7z" fill="#6d97c4" stroke="#466b92"/><path d="M1 2h20v3H1z" fill="#fce94f" stroke="#c4a000"/><path d="M17 19h8l-4 4z" fill="#444"/>',
  collapse: '<path d="M1 2h9M4 2v20M4 9h6M4 20h6" stroke="#777" fill="none" stroke-width="1.500"/><path d="M7 6h4v4H7zM7 17h4v4H7z" fill="#fff" stroke="#f57900" stroke-width="2"/><path d="M17 1l7 8h-4v13h-6V9h-4z" fill="#6d97c4" stroke="#24476e" stroke-width="1.300"/>',
  expand: '<path d="M1 2h9M4 2v20M4 9h6M4 20h6" stroke="#777" fill="none" stroke-width="1.500"/><path d="M7 6h4v4H7zM7 17h4v4H7z" fill="#fff" stroke="#f57900" stroke-width="2"/><path d="M17 22l7-8h-4V1h-6v13h-4z" fill="#6d97c4" stroke="#24476e" stroke-width="1.300"/>',
  info: '<circle cx="12" cy="12" r="10" fill="#6d97c4" stroke="#466b92"/><text x="12" y="18.500" font-size="18" font-style="italic" font-weight="700" text-anchor="middle" font-family="Liberation Serif" fill="#fff">i</text>',
  brush: '<path d="M14 9l8-7 1 2-6 8z" fill="#c17d11" stroke="#8f5902"/><path d="M2 10l6 1 5-3 6 7-8 7q-7-3-9-12z" fill="#f2a73b"/><path d="M2 10q2 9 9 12l4-4-7-7z" fill="#dd3b2a"/><path d="M5 11l9 9" stroke="#fce94f" stroke-width="2"/>',
  group: '<path d="M1.500 7.500h11v14h-11zM5 4h11v14M9 7.500h9v11" fill="none" stroke="#777" stroke-width="1.500"/><path d="M11 17V3a2.500 2.500 0 0 1 5 0v12" fill="none" stroke="#444" stroke-width="1.600"/><path d="M14 14h9v9h-9z" fill="#5b8f5f"/><path d="M18.500 15v7M15 18.500h7" stroke="#fff" stroke-width="2"/>',
  eye: '<path d="M1 12Q11 0 22 12 11 22 1 12z" fill="#eee" stroke="#777" stroke-width="1.500"/><circle cx="12" cy="11.500" r="5" fill="#6d97c4" stroke="#24476e"/><circle cx="12" cy="11.500" r="2" fill="#111"/><path d="M16 19h8l-4 4z" fill="#444"/>',
  eps: '<text x="0" y="15" font-size="20" font-family="Noto Sans" fill="#555">ε</text><path d="M12 22v-7q5-6 9 0v7h-3v-5h-3v5z" fill="#999"/>',
  remove: '<path d="M1.500 2.500h17v17h-17z" fill="#f7f7f7" stroke="#888" stroke-width="1.500"/><rect x="13" y="15" width="11" height="8" rx="3" fill="#e34b4b"/><path d="M15 19h7" stroke="#fff" stroke-width="2"/>',
  folder: '<path d="M1 2h10l3 3h9v17H1z" fill="#f0f0f0" stroke="#8b8b8b" stroke-width="1.600"/>',
  folderopen: '<path d="M1 0h9l3 3h10v4H1z" fill="#888a85"/><path d="M1 8h10l3 3h9v11H1z" fill="#f0f0f0" stroke="#8b8b8b" stroke-width="1.600"/>',
  home: '<path d="M1 2h10l3 3h9v17H1z" fill="#f0f0f0" stroke="#8b8b8b" stroke-width="1.600"/><path d="M6 14l6-6 6 6h-2v5H8v-5z" fill="#fff" stroke="#222" stroke-width="1.600"/>',
  db: '<path d="M3 5v15q9 5 18 0V5" fill="#f2f2f2" stroke="#888" stroke-width="1.700"/><ellipse cx="12" cy="5" rx="9" ry="3" fill="#fff" stroke="#888" stroke-width="1.700"/><path d="M3 10q9 5 18 0M3 15q9 5 18 0" stroke="#888" fill="none" stroke-width="1.500"/>',
  raster: '<path d="M1 1h22v22H1z" fill="#3f86bd"/><path d="M1 1h6v6H1zM12 1h5v6h-5zM7 7h5v5H7zM17 7h6v5h-6zM1 12h6v6H1zM12 12h5v6h-5zM7 18h5v5H7zM17 18h6v5h-6z" fill="#26486b"/><path d="M17 1h6v6h-6zM12 7h5v5h-5zM7 12h5v6H7zM17 12h6v6h-6z" fill="#9cc4e6"/>'
};
const svg = n => `<svg viewBox="0 0 24 24">${ICONS[n]}</svg>`;

/* ---- toolbars ---- */
function tool(token) {
  if (token === 'G') return '<i class="grip first"></i>';
  if (token === 'g') return '<i class="grip"></i>';
  if (token === 's') return '<i class="sep"></i>';
  if (token === '@spin') return '<div class="spin"><span>12</span><div class="spin-btns"><i class="u"></i><i class="d"></i></div></div>';
  if (token === '@combo') return '<div class="combo"><span>px</span><i></i></div>';
  const [name, flags = ''] = token.split(':');
  const cls = ['tool'];
  if (flags.includes('o')) cls.push('off');
  if (flags.includes('a')) cls.push('arrow');
  if (flags.includes('p')) cls.push('pressed');
  return `<div class="${cls.join(' ')}">${svg(name)}</div>`;
}
document.querySelectorAll('[data-items]').forEach(el => { el.innerHTML = el.dataset.items.split(' ').map(tool).join(''); });
document.querySelectorAll('[data-small]').forEach(el => { el.innerHTML = el.dataset.small.split(' ').map(tool).join(''); });
document.querySelectorAll('[data-icon]').forEach(el => { el.innerHTML = svg(el.dataset.icon); });
document.querySelectorAll('.dock-btns').forEach(el => {
  const frame = '<rect x=".5" y=".5" width="10" height="10" rx="2" fill="#f5f5f5" stroke="#555"/>';
  el.innerHTML = `<svg viewBox="0 0 11 11">${frame}<path d="M4.500 2.500h4v4h-4zM2.500 4.500h4v4h-4z" fill="#f5f5f5" stroke="#555"/></svg><svg viewBox="0 0 11 11">${frame}<path d="M3 3l5 5M8 3L3 8" stroke="#444" stroke-width="2"/></svg>`;
});

/* ---- browser tree: depth, state, icon, label, label width ---- */
const c = 'closed', o = 'open';
const rows = [
  [2, c, 'folder', 'vectorial', 58], [0, c, 'marks', 'Marcadores espaciales', 153], [0, o, 'home', 'Inicio', 36],
  [1, c, 'folder', 'Descargas', 69], [1, o, 'folderopen', 'Documentos', 86], [2, c, 'folder', 'AnyDesk', 59],
  [2, c, 'folder', 'campo_jaime', 89], [2, o, 'folderopen', 'IMSE1014', 67], [3, c, 'folder', 'eva1', 31],
  [3, c, 'folder', 'taller2', 44], [3, c, 'folder', 'taller3', 44], [3, c, 'folder', 'taller4', 44], [3, c, 'folder', 'taller5', 44],
  [3, o, 'folderopen', 'taller6', 44], [4, c, 'db', 'cerrro_poqui.gpkg', 125], [4, '', 'raster', 'S2B2A_20230423_096_19HCC_BOA_10.tif', 287],
  [2, c, 'folder', 'Manejo-SIG2022', 110], [2, c, 'folder', 'Peliculas', 59], [2, c, 'folder', 'personal', 59],
  [2, o, 'folderopen', 'R-projects', 69], [3, c, 'folder', 'agrometR', 68], [3, c, 'folder', 'CER-Analytics', 93],
  [3, c, 'folder', 'Chile-ecosystem-change-drought', 224], [3, c, 'folder', 'FONDEF-satori', 101], [3, c, 'folder', 'specalyzer', 71],
  [2, c, 'folder', 'renta', 37], [2, c, 'folder', 'senET', 41], [1, c, 'folder', 'Dropbox', 59], [1, c, 'folder', 'esa-snap', 59],
  [1, c, 'folder', 'Escritorio', 64], [1, c, 'folder', 'Imágenes', 65], [1, c, 'folder', 'miniconda3', 78], [1, c, 'folder', 'Música', 47],
  [1, c, 'folder', 'Plantillas', 63]
];
document.getElementById('tree').innerHTML = rows.map(([d, s, ic, label, w]) =>
  `<div class="row${s ? '' : ' sel'}" style="--d:${d}"><i class="tri ${s}"></i><i class="ico">${svg(ic)}</i><span data-w="${w}">${label}</span></div>`).join('');

/* ---- bright pixels scattered over the dark land ---- */
let seed = 7;
const rnd = () => (seed = (seed * 16807) % 2147483647) / 2147483647;
const tones = ['#1f5a6b', '#2b3550', '#3c3030', '#22505c', '#39424f', '#1a2440'];
let dots = '';
for (let k = 0; k < 3000; k++) {
  const x = 120 + Math.floor(534 * Math.sqrt(rnd())), y = Math.floor(654 * rnd());
  if (x < 300 && y < 330) continue;
  dots += `<rect x="${x}" y="${y}" width="1" height="1" fill="${tones[Math.floor(rnd() * 6)]}"/>`;
}
/* clusters: centre x, centre y, spread x, spread y, count, opacity */
[[638, 172, 18, 22, 150, .85], [636, 510, 14, 40, 160, .4], [598, 565, 34, 14, 130, .5], [630, 610, 20, 40, 110, .35], [238, 498, 34, 24, 120, .28], [440, 430, 45, 40, 160, .25], [510, 380, 8, 20, 26, .6]].forEach(([cx, cy, sx, sy, n, op]) => {
  for (let k = 0; k < n; k++) {
    const x = cx + sx * (rnd() + rnd() - 1) * 1.3, y = cy + sy * (rnd() + rnd() - 1) * 1.3;
    dots += `<rect x="${x | 0}" y="${y | 0}" width="${1 + (k % 2)}" height="1" fill="${['#cfdfe6', '#7fa5b2', '#a5776d', '#5c6f9c'][k % 4]}" opacity="${op}"/>`;
  }
});
document.getElementById('specks').innerHTML = dots;

/* ---- spread each label over its column width ---- */
document.querySelectorAll('[data-w]').forEach(el => {
  const w = +el.dataset.w, n = el.textContent.length;
  el.style.letterSpacing = ((w - el.getBoundingClientRect().width) / n).toFixed(3) + 'px';
});
```
